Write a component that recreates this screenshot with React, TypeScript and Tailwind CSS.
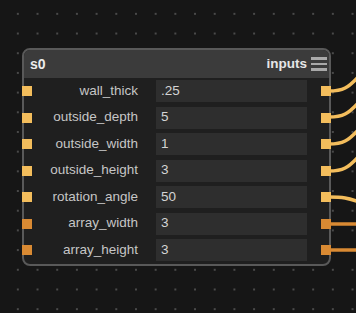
import React from 'react';

const rows = [
  { name: 'wall_thick', value: '.25', kind: 'num' },
  { name: 'outside_depth', value: '5', kind: 'num' },
  { name: 'outside_width', value: '1', kind: 'num' },
  { name: 'outside_height', value: '3', kind: 'num' },
  { name: 'rotation_angle', value: '50', kind: 'num' },
  { name: 'array_width', value: '3', kind: 'int' },
  { name: 'array_height', value: '3', kind: 'int' },
];

function Port({ kind, side }: { kind: string; side: 'left' | 'right' }) {
  const color = kind === 'num' ? 'bg-[#f3bd5c]' : 'bg-[#d98a33]';
  const margin = side === 'left' ? '-ml-[2px]' : 'ml-[14px] -mr-[2px]';
  return <div className={`w-[10px] h-[10px] shrink-0 ${color} ${margin}`} />;
}

function Wires() {
  return (
    <svg className="absolute inset-0 pointer-events-none" width="356" height="313" fill="none">
      <g stroke="#f3bd5c" strokeWidth="3.5">
        <path d="M329 91 C343 91 348 88 359 76" />
        <path d="M329 117 C343 117 348 114 359 102" />
        <path d="M329 144 C343 144 348 141 359 129" />
        <path d="M329 171 C343 171 348 168 359 156" />
        <path d="M329 197 C343 197 348 198 359 202" />
      </g>
      <g stroke="#d98a33" strokeWidth="3.5">
        <path d="M329 224 H359" />
        <path d="M329 250 H359" />
      </g>
    </svg>
  );
}

export default function App() {
  return (
    <div
      className="relative w-[356px] h-[313px] overflow-hidden bg-[#161616] bg-[radial-gradient(circle_at_center,#4a4a4a_0.8px,transparent_1.2px)] bg-[length:19.7px_19.7px] bg-[position:8px_4px] pt-[48px] pl-[22px]"
      style={{ fontFamily: '"Liberation Sans", Arial, sans-serif' }}
    >
      <Wires />
      <div className="relative w-[309px] border-2 border-[#595959] rounded-[8px] bg-[#1f1f1f] pb-[3px]">
        <div className="flex items-center h-[28px] bg-[#3b3b3b] rounded-t-[6px] pl-[6px] pr-[2px]">
          <span className="text-[14px] font-bold text-[#ececec]">s0</span>
          <span className="ml-auto text-[13.5px] font-bold text-[#e6e6e6]">inputs</span>
          <div className="ml-[4px] w-[16px] flex flex-col gap-[3px]">
            <div className="h-[2.5px] bg-[#a9a9a9]" />
            <div className="h-[2.5px] bg-[#a9a9a9]" />
            <div className="h-[2.5px] bg-[#a9a9a9]" />
          </div>
        </div>
        <div className="flex flex-col gap-[4.5px] pt-[2px]">
          {rows.map((r) => (
            <div key={r.name} className="flex items-center h-[22px]">
              <Port kind={r.kind} side="left" />
              <div className="w-[106px] text-right text-[13.5px] text-[#c6c6c6]">{r.name}</div>
              <div className="ml-[18px] w-[151px] h-[22px] bg-[#2e2e2e] flex items-center pl-[5px] text-[13.5px] text-[#d4d4d4]">
                {r.value}
              </div>
              <Port kind={r.kind} side="right" />
            </div>
          ))}
        </div>
      </div>
    </div>
  );
}
